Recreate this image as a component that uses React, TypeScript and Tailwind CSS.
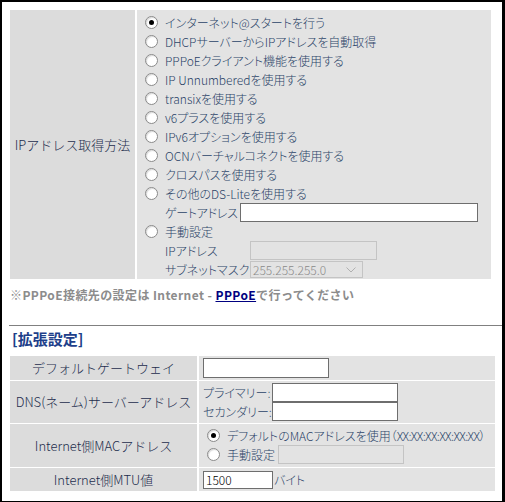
import React from "react";

const Radio = ({ checked = false }: { checked?: boolean }) => (
  <span className="w-[13px] h-[13px] rounded-full border border-[#8a8a8a] bg-white flex items-center justify-center shrink-0 shadow-[inset_1px_1px_1px_rgba(0,0,0,0.15)]">
    {checked && <span className="w-[5px] h-[5px] rounded-full bg-black" />}
  </span>
);

const RadioRow = ({ label, checked = false }: { label: React.ReactNode; checked?: boolean }) => (
  <div className="flex items-center h-[19px]">
    <Radio checked={checked} />
    <span className="ml-[7px] leading-none whitespace-nowrap">{label}</span>
  </div>
);

const options = [
  "インターネット@スタートを行う",
  "DHCPサーバーからIPアドレスを自動取得",
  "PPPoEクライアント機能を使用する",
  "IP Unnumberedを使用する",
  "transixを使用する",
  "v6プラスを使用する",
  "IPv6オプションを使用する",
  "OCNバーチャルコネクトを使用する",
  "クロスパスを使用する",
  "その他のDS-Liteを使用する",
];

export default function App() {
  return (
    <div className="w-[505px] h-[503px] bg-white border-t-2 border-l-2 border-b-2 border-r-[3px] border-black pl-[8px] pt-[8px] overflow-hidden font-light font-['Noto_Sans_CJK_JP','Noto_Sans',sans-serif]">
      <div className="grid grid-cols-[125px_354px] gap-x-[2px] w-[481px] h-[269px]">
        <div className="bg-[#dcdcdc] flex items-center justify-center text-[13px] text-[#1d2d4d]">
          IPアドレス取得方法
        </div>
        <div className="bg-[#e3e3e3] pt-[3px] pl-[8px] text-[12px] text-[#2b4468] [font-feature-settings:'palt']">
          {options.map((o, i) => (
            <RadioRow key={o} label={o} checked={i === 0} />
          ))}
          <div className="flex items-center h-[19px] pl-[20px]">
            <span className="w-[75px] leading-none whitespace-nowrap tracking-[-0.3px]">ゲートアドレス</span>
            <div className="w-[238px] h-[19px] bg-white border border-[#6e6e6e]" />
          </div>
          <RadioRow label="手動設定" />
          <div className="flex items-center h-[19px] pl-[20px]">
            <span className="w-[85px] leading-none whitespace-nowrap">IPアドレス</span>
            <div className="w-[127px] h-[19px] bg-[#e3e3e3] border border-[#c4c4c4]" />
          </div>
          <div className="flex items-center h-[19px] pl-[20px]">
            <span className="w-[85px] leading-none whitespace-nowrap">サブネットマスク</span>
            <div className="w-[113px] h-[17px] bg-[#e3e3e3] border border-[#c4c4c4] flex items-center justify-between pl-[2px] pr-[6px] text-[#8a8a8a]">
              <span className="leading-none">255.255.255.0</span>
              <svg width="10" height="6" viewBox="0 0 10 6" fill="none">
                <path d="M0.5 0.5 L5 5 L9.5 0.5" stroke="#b0b0b0" strokeWidth="1" />
              </svg>
            </div>
          </div>
        </div>
      </div>

      <div className="mt-[8px] h-[16px] leading-[16px] text-[12px] font-bold tracking-[0.4px] text-[#8c8c8c] whitespace-nowrap">
        ※PPPoE接続先の設定は Internet - <span className="text-[#000080] underline">PPPoE</span>で行ってください
      </div>

      <div className="mt-[22px] ml-[-1px] h-px bg-[#808080]" />

      <div className="mt-[4px] ml-[2px] h-[18px] leading-[18px] text-[15px] font-bold text-[#1e3f8a]">
        [拡張設定]
      </div>

      <div className="mt-[8px] grid grid-cols-[187px_296px] grid-rows-[24px_42px_43px_23px] gap-x-[2px] gap-y-[1px] w-[485px] text-[#2b4468]">
        <div className="bg-[#dcdcdc] flex items-center justify-center text-[13px] text-[#1d2d4d]">
          デフォルトゲートウェイ
        </div>
        <div className="bg-[#e3e3e3] flex items-center pl-[4px]">
          <div className="w-[126px] h-[20px] bg-white border border-[#6e6e6e]" />
        </div>

        <div className="bg-[#dcdcdc] flex items-center justify-center text-[13px] text-[#1d2d4d] whitespace-nowrap">
          DNS(ネーム)サーバーアドレス
        </div>
        <div className="bg-[#e3e3e3] flex flex-col pt-[2px] pl-[4px] text-[12px] [font-feature-settings:'palt']">
          <div className="flex items-center h-[19px]">
            <span className="w-[69px] leading-none whitespace-nowrap">プライマリー:</span>
            <div className="w-[126px] h-[19px] bg-white border border-[#6e6e6e]" />
          </div>
          <div className="flex items-center h-[19px]">
            <span className="w-[69px] leading-none whitespace-nowrap">セカンダリー:</span>
            <div className="w-[126px] h-[19px] bg-white border border-[#6e6e6e]" />
          </div>
        </div>

        <div className="bg-[#dcdcdc] flex items-center justify-center text-[13px] text-[#1d2d4d]">
          Internet側MACアドレス
        </div>
        <div className="bg-[#e3e3e3] flex flex-col pt-[2px] pl-[8px] text-[12px] [font-feature-settings:'palt']">
          <RadioRow
            label={
              <>
                デフォルトのMACアドレスを使用（<span className="tracking-[-0.6px]">XX:XX:XX:XX:XX:XX</span>）
              </>
            }
            checked
          />
          <div className="flex items-center h-[19px]">
            <Radio />
            <span className="ml-[7px] leading-none whitespace-nowrap">手動設定</span>
            <div className="ml-[3px] w-[126px] h-[19px] bg-[#e3e3e3] border border-[#c4c4c4]" />
          </div>
        </div>

        <div className="bg-[#dcdcdc] flex items-center justify-center text-[13px] text-[#1d2d4d]">
          Internet側MTU値
        </div>
        <div className="bg-[#e3e3e3] flex items-center pl-[4px] text-[12px] [font-feature-settings:'palt']">
          <div className="w-[70px] h-[18px] bg-white border border-[#6e6e6e] flex items-center pl-[2px] text-black leading-none">
            1500
          </div>
          <span className="ml-[1px] leading-none">バイト</span>
        </div>
      </div>
    </div>
  );
}
